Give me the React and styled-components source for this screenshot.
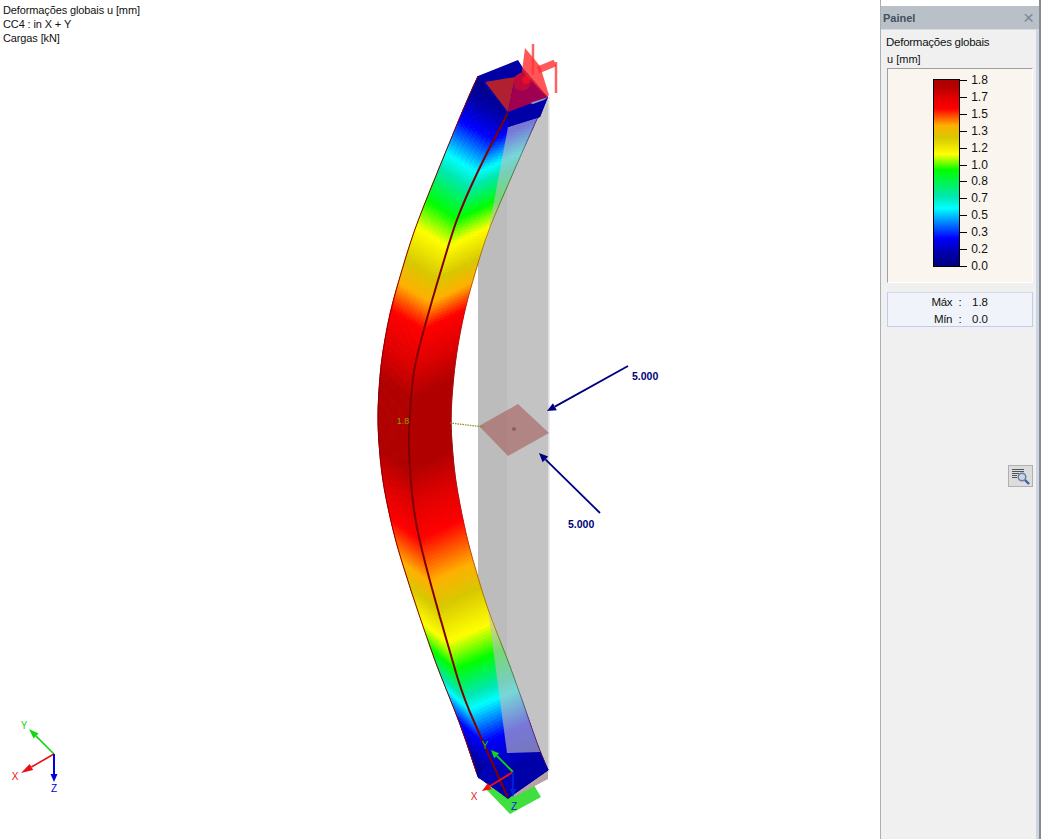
import React from "react";
import styled, { createGlobalStyle } from "styled-components";

const GlobalStyle = createGlobalStyle`
  html, body { margin: 0; padding: 0; background: #fff; }
  body { font-family: "Liberation Sans", Arial, sans-serif; }
`;

const Page = styled.div`
  display: flex;
  width: 1058px;
  height: 839px;
  overflow: hidden;
  background: #fff;
`;
const Viewport = styled.main`
  position: relative;
  flex: 0 0 880px;
  height: 839px;
`;
const Caption = styled.div`
  position: absolute;
  left: 3px;
  top: 3px;
  font-size: 11px;
  line-height: 14px;
  letter-spacing: -0.12px;
  color: #111;
`;
const Scene = styled.svg`
  display: block;
  width: 880px;
  height: 839px;
`;
const Panel = styled.aside`
  flex: 0 0 161px;
  height: 839px;
  box-sizing: border-box;
  padding-top: 6px;
  display: flex;
  flex-direction: column;
  background: #fff;
  border-left: 1px solid #a9afb6;
  border-right: 2px solid #858b92;
`;
const TitleBar = styled.header`
  flex: 0 0 23px;
  display: flex;
  align-items: center;
  justify-content: space-between;
  padding: 0 5px 0 2px;
  background: #b9c0c8;
  color: #45505c;
  font-size: 11px;
  font-weight: bold;
`;
const CloseMark = styled.span`
  color: #808890;
  font-size: 19px;
  line-height: 20px;
  font-weight: normal;
`;
const PanelBody = styled.div`
  flex: 1;
  display: flex;
  flex-direction: column;
  padding: 5px 3px 0 5px;
  background: #f0f0f0;
  border-right: 3px solid #cdd4e2;
  border-top: 1px solid #d8dce0;
`;
const Heading = styled.div`
  font-size: 11.5px;
  line-height: 14px;
  letter-spacing: -0.25px;
  color: #111;
`;
const Unit = styled(Heading)`
  margin: 3px 0 0 1px;
  letter-spacing: 0;
  font-size: 11px;
`;
const LegendBox = styled.div`
  box-sizing: border-box;
  height: 215px;
  width: 146px;
  margin: 2px 0 0 1px;
  padding-top: 10px;
  display: flex;
  justify-content: center;
  gap: 6px;
  background: #faf6ef;
  border-top: 1px solid #a0a0a0;
  border-left: 1px solid #a0a0a0;
  border-right: 1px solid #fff;
  border-bottom: 1px solid #fff;
`;
const ScaleBar = styled.div`
  box-sizing: border-box;
  width: 27px;
  height: 188px;
  margin-left: 1px;
  border: 1px solid #000;
`;
const ScaleLabels = styled.ul`
  list-style: none;
  margin: -6px 0 0 0;
  padding: 0;
  height: 200px;
  display: flex;
  flex-direction: column;
  justify-content: space-between;
`;
const ScaleLabel = styled.li`
  position: relative;
  font-size: 12px;
  line-height: 14px;
  height: 14px;
  color: #111;
  margin-left: 5px;
  &::before {
    content: "";
    position: absolute;
    left: -11px;
    top: 7px;
    width: 7px;
    height: 1px;
    background: #000;
  }
`;
const Stats = styled.div`
  box-sizing: border-box;
  width: 146px;
  height: 35px;
  margin: 9px 0 0 1px;
  padding-top: 1px;
  background: #f0f3fa;
  border: 1px solid #c3cbec;
  border-top-color: #d4dae8;
`;
const StatRow = styled.div`
  display: grid;
  grid-template-columns: 67px 10px 30px;
  justify-content: start;
  font-size: 11.5px;
  line-height: 17px;
  color: #111;
  text-align: center;
`;
const StatName = styled.span`
  text-align: right;
  padding-right: 3px;
  letter-spacing: -0.4px;
`;
const ToolButton = styled.button`
  align-self: flex-end;
  margin: 138px 0 0 0;
  width: 25px;
  height: 22px;
  padding: 0;
  display: flex;
  align-items: center;
  justify-content: center;
  background: #dcdcdc;
  border: 1px solid #b0b0b0;
`;

const STOPS = [
  [0, [0, 0, 127]], [0.07, [0, 0, 170]], [0.15, [0, 0, 255]], [0.23, [0, 128, 255]],
  [0.31, [0, 255, 255]], [0.374, [0, 232, 176]], [0.516, [0, 255, 0]], [0.6, [255, 255, 0]],
  [0.69, [216, 200, 0]], [0.756, [255, 176, 0]], [0.845, [255, 0, 0]], [0.907, [224, 0, 0]],
  [0.97, [176, 0, 0]], [1, [176, 0, 0]],
];
const colorAt = (v) => {
  const c = Math.max(0, Math.min(1, v));
  for (let i = 1; i < STOPS.length; i++) {
    if (c <= STOPS[i][0]) {
      const [a, ca] = STOPS[i - 1];
      const [b, cb] = STOPS[i];
      const k = (c - a) / (b - a);
      return `rgb(${ca.map((x, j) => Math.round(x + (cb[j] - x) * k)).join(",")})`;
    }
  }
  return "rgb(176,0,0)";
};

const linear = (keys, y) => {
  const n = keys.length;
  if (y <= keys[0][0]) {
    return keys[0][1] + (y - keys[0][0]) * (keys[1][1] - keys[0][1]) / (keys[1][0] - keys[0][0]);
  }
  for (let i = 1; i < n; i++) {
    if (y <= keys[i][0]) {
      return keys[i - 1][1] + (keys[i][1] - keys[i - 1][1]) * (y - keys[i - 1][0]) / (keys[i][0] - keys[i - 1][0]);
    }
  }
  return keys[n - 1][1] + (y - keys[n - 1][0]) * (keys[n - 1][1] - keys[n - 2][1]) / (keys[n - 1][0] - keys[n - 2][0]);
};
const smooth = (keys, y, radius = 36) => {
  let sum = 0, w = 0;
  for (let d = -radius; d <= radius; d += 4) {
    const k = 1 - Math.abs(d) / (radius + 4);
    sum += linear(keys, y + d) * k;
    w += k;
  }
  return sum / w;
};
const clampedValue = (keys, y) => {
  if (y <= keys[0][0]) return keys[0][1];
  if (y >= keys[keys.length - 1][0]) return keys[keys.length - 1][1];
  return linear(keys, y);
};

const LEFT = [[76,478],[93,470],[173,437],[233,413],[307,391],[360,381],[420,377],[480,382],[540,395],[597,413],[667,437],[723,460],[777,478]];
const RIDGE = [[113,508],[160,483],[217,457],[307,430],[370,413],[440,408],[500,412],[540,419],[607,437],[697,463],[798,508]];
const RIGHT = [[112,540],[173,513],[233,487],[307,465],[360,455],[420,450],[480,455],[540,467],[608,487],[663,509],[717,528],[753,540],[770,548]];
const VALUE = [[100,0.02],[113,0.05],[140,0.15],[173,0.31],[220,0.516],[247,0.6],[303,0.756],[330,0.845],[400,0.97],[470,0.97],[540,0.845],[583,0.756],[643,0.6],[670,0.516],[710,0.31],[743,0.15],[790,0.03],[820,0.02]];

const buildFace = (edgeKeys, y0, y1) => {
  const quads = [];
  const rows = 230;
  const cols = 8;
  const point = (t, s) => {
    const yr = 113 + (798 - 113) * t;
    const xr = smooth(RIDGE, yr);
    const ye = y0 + (y1 - y0) * t;
    const xe = smooth(edgeKeys, ye);
    return [xr + (xe - xr) * s, yr + (ye - yr) * s];
  };
  for (let r = 0; r < rows; r++) {
    for (let c = 0; c < cols; c++) {
      const t0 = r / rows, t1 = (r + 1) / rows, s0 = c / cols, s1 = (c + 1) / cols;
      const pts = [point(t0, s0), point(t1, s0), point(t1, s1), point(t0, s1)];
      const cy = pts.reduce((a, p) => a + p[1], 0) / 4;
      const s = (s0 + s1) / 2;
      const col = colorAt(clampedValue(VALUE, cy + 20 * s));
      quads.push({ d: pts.map((p) => p.map((n) => n.toFixed(1)).join(",")).join(" "), col });
    }
  }
  return quads;
};

const curvePath = (keys, y0, y1, step = 4) => {
  const out = [];
  for (let y = y0; y <= y1; y += step) out.push(`${smooth(keys, y).toFixed(1)},${y}`);
  return out;
};

const LEFT_FACE = buildFace(LEFT, 76, 777);
const RIGHT_FACE = buildFace(RIGHT, 112, 770);
const GLASS_TOP = ["508,127", ...curvePath(RIGHT, 112, 233)].join(" ");
const GLASS_BOTTOM = [...curvePath(RIGHT, 608, 753), "507,753"].join(" ");

const Arrow = ({ x1, y1, x2, y2, color, width = 2, head = 9, headW = 4 }) => {
  const dx = x2 - x1, dy = y2 - y1;
  const len = Math.hypot(dx, dy);
  const ux = dx / len, uy = dy / len;
  const bx = x2 - ux * head, by = y2 - uy * head;
  const pts = `${x2},${y2} ${bx - uy * headW},${by + ux * headW} ${bx + uy * headW},${by - ux * headW}`;
  return (
    <g>
      <line x1={x1} y1={y1} x2={bx} y2={by} stroke={color} strokeWidth={width} />
      <polygon points={pts} fill={color} />
    </g>
  );
};

const AxisLabel = ({ x, y, color, children }) => (
  <text x={x} y={y} fill={color} fontSize="10" fontFamily="Liberation Sans, Arial, sans-serif" textAnchor="middle">{children}</text>
);

const LoadLabel = ({ x, y }) => (
  <text x={x} y={y} fill="#00007a" fontSize="10.5" fontWeight="bold" fontFamily="Liberation Sans, Arial, sans-serif">5.000</text>
);

const Beam = () => (
  <g>
    <polygon points="541,797 510,814 485,788 532,782" fill="#3fdf3f" />
    <rect x="478" y="97" width="29" height="682" fill="#bcbcbc" />
    <rect x="507" y="97" width="41" height="682" fill="#c3c3c3" />
    <rect x="548" y="97" width="1.5" height="675" fill="#dedede" />
    <polygon points="548,770 548,779 514,797 510,790" fill="#b4a4a4" />
    <g>
      {LEFT_FACE.map((q, i) => <polygon key={`l${i}`} points={q.d} fill={q.col} stroke={q.col} strokeWidth="1" />)}
      {RIGHT_FACE.map((q, i) => <polygon key={`r${i}`} points={q.d} fill={q.col} stroke={q.col} strokeWidth="1" />)}
    </g>
    <polygon points={GLASS_TOP} fill="#c0c0c0" fillOpacity="0.62" />
    <polygon points={GLASS_BOTTOM} fill="#c0c0c0" fillOpacity="0.62" />
    <polyline points={curvePath(LEFT, 76, 777, 6).join(" ")} fill="none" stroke="#8b0000" strokeWidth="1" />
    <polyline points={curvePath(RIGHT, 112, 770, 6).join(" ")} fill="none" stroke="#8b2020" strokeOpacity="0.55" strokeWidth="1" />
    <polygon points="478,776 508,799 513,795 513,772 490,760" fill="#0000b4" />
    <polygon points="513,773 540,753 548,770 513,795" fill="#0000a8" />
    <polyline points={curvePath(RIDGE, 113, 798, 6).join(" ")} fill="none" stroke="#7f0000" strokeWidth="2" />
    <polygon points="478,76 518,60 523,68 548,97 540,117 508,127 508,113" fill="#0000a5" />
    <polygon points="508,113 548,97 540,117 508,127" fill="#0000a8" />
    <polygon points="485,82 515,77 508,112" fill="#b02030" />
    <polygon points="515,77 523,71 548,97 508,112" fill="#a00050" />
    <polygon points="530,103 548,97 544,100 533,104" fill="#9098c8" />
  </g>
);

const Support = () => (
  <g>
    <circle cx="522" cy="82" r="9" fill="#d01030" fillOpacity="0.6" />
    <circle cx="526" cy="80" r="4" fill="#f01020" fillOpacity="0.8" />
    <polygon points="525,48 540,66 549,95 547,97 522,71" fill="#ff2828" fillOpacity="0.78" />
    <line x1="533" y1="44" x2="533" y2="75" stroke="#ff3030" strokeOpacity="0.75" strokeWidth="2.5" />
    <line x1="538" y1="70" x2="555" y2="63" stroke="#ff3030" strokeOpacity="0.8" strokeWidth="7" />
    <line x1="556" y1="62" x2="556" y2="93" stroke="#ff3030" strokeOpacity="0.75" strokeWidth="2.5" />
  </g>
);

const LoadPoint = () => (
  <g>
    <polygon points="479,426 518,404 549,433 508,456" fill="#a86060" fillOpacity="0.62" />
    <circle cx="514" cy="429" r="2" fill="#8a6060" />
    <line x1="450" y1="423" x2="484" y2="427" stroke="#8c8c10" strokeWidth="1.2" strokeDasharray="1.5 1" />
    <text x="403" y="423.5" fill="#8aa000" fontSize="9" fontFamily="Liberation Sans, Arial, sans-serif" textAnchor="middle">1.8</text>
    <Arrow x1={628} y1={366} x2={547} y2={411} color="#00007f" width={1.8} head={9} headW={4} />
    <Arrow x1={600} y1={513} x2={539} y2={453} color="#00007f" width={1.8} head={9} headW={4} />
    <LoadLabel x={632} y={380} />
    <LoadLabel x={568} y={528} />
  </g>
);

const LocalAxes = () => (
  <g>
    <Arrow x1={513} y1={772} x2={491} y2={750} color="#10d810" width={1.8} head={8} headW={3.5} />
    <Arrow x1={513} y1={772} x2={482} y2={791} color="#f01010" width={1.8} head={9} headW={3.5} />
    <Arrow x1={513} y1={772} x2={513} y2={797} color="#0020e0" width={1.8} head={8} headW={3} />
    <AxisLabel x={474} y={800} color="#e02020">X</AxisLabel>
    <AxisLabel x={485} y={749} color="#10c810">Y</AxisLabel>
    <AxisLabel x={514} y={810} color="#1020e0">Z</AxisLabel>
  </g>
);

const GlobalAxes = () => (
  <g>
    <Arrow x1={54} y1={754} x2={29} y2={729} color="#10d810" width={1.6} head={10} headW={3.5} />
    <Arrow x1={54} y1={754} x2={21} y2={773} color="#e81010" width={1.6} head={12} headW={3.5} />
    <Arrow x1={54} y1={754} x2={54} y2={782} color="#0000e0" width={2} head={8} headW={3.5} />
    <AxisLabel x={24} y={729} color="#10d810">Y</AxisLabel>
    <AxisLabel x={15} y={780} color="#e81010">X</AxisLabel>
    <AxisLabel x={54} y={792} color="#0000e0">Z</AxisLabel>
  </g>
);

const SearchListIcon = () => (
  <svg width="19" height="17" viewBox="0 0 19 17">
    <g stroke="#555" strokeWidth="1">
      <line x1="1" y1="1.5" x2="13" y2="1.5" />
      <line x1="1" y1="3.5" x2="13" y2="3.5" />
      <line x1="1" y1="5.5" x2="8" y2="5.5" />
      <line x1="1" y1="7.5" x2="6" y2="7.5" />
      <line x1="1" y1="9.5" x2="6" y2="9.5" />
    </g>
    <circle cx="11" cy="9" r="3.8" fill="#c8d4e8" stroke="#6b7f9e" strokeWidth="1.5" />
    <line x1="14" y1="12" x2="18" y2="16" stroke="#3f5f9f" strokeWidth="2.4" />
  </svg>
);

const SCALE = ["1.8","1.7","1.5","1.3","1.2","1.0","0.8","0.7","0.5","0.3","0.2","0.0"];
const scaleGradient = `linear-gradient(to top, ${STOPS.map(([p]) => `${colorAt(p)} ${(p * 100).toFixed(1)}%`).join(", ")})`;

export default function App() {
  return (
    <Page>
      <GlobalStyle />
      <Viewport>
        <Scene viewBox="0 0 880 839">
          <Beam />
          <LoadPoint />
          <Support />
          <LocalAxes />
          <GlobalAxes />
        </Scene>
        <Caption>
          <div>Deformações globais u [mm]</div>
          <div>CC4 : in X + Y</div>
          <div>Cargas [kN]</div>
        </Caption>
      </Viewport>
      <Panel>
        <TitleBar>
          <span>Painel</span>
          <CloseMark>×</CloseMark>
        </TitleBar>
        <PanelBody>
          <Heading>Deformações globais</Heading>
          <Unit>u [mm]</Unit>
          <LegendBox>
            <ScaleBar style={{ background: scaleGradient }} />
            <ScaleLabels>
              {SCALE.map((s) => <ScaleLabel key={s}>{s}</ScaleLabel>)}
            </ScaleLabels>
          </LegendBox>
          <Stats>
            <StatRow><StatName>Máx</StatName><span>:</span><span>1.8</span></StatRow>
            <StatRow><StatName>Mín</StatName><span>:</span><span>0.0</span></StatRow>
          </Stats>
          <ToolButton aria-label="Procurar">
            <SearchListIcon />
          </ToolButton>
        </PanelBody>
      </Panel>
    </Page>
  );
}
